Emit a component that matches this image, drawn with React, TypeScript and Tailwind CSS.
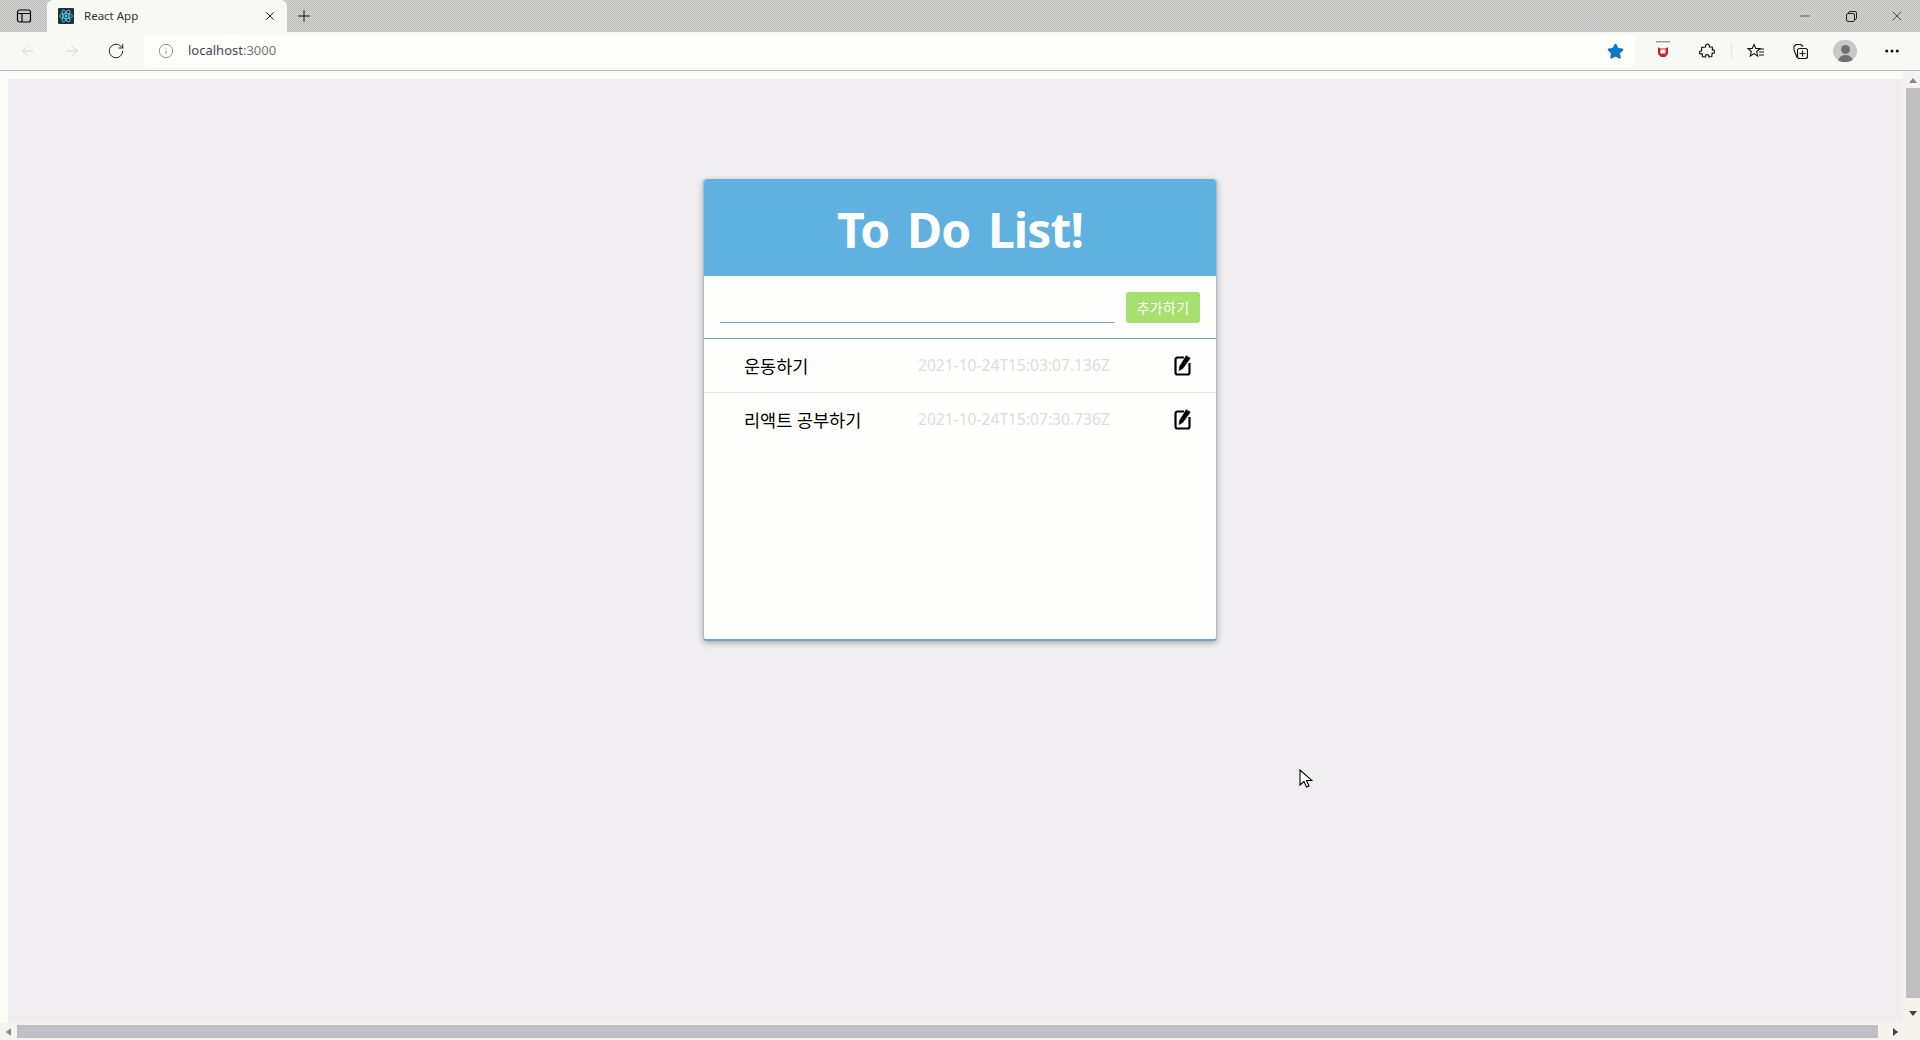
import { ArrowLeft, ArrowRight, RotateCw, Info, X, Plus, Minus, Star, MoreHorizontal } from "lucide-react";

const todos = [
  { title: "운동하기", date: "2021-10-24T15:03:07.136Z" },
  { title: "리액트 공부하기", date: "2021-10-24T15:07:30.736Z" },
];

function PencilSquare() {
  return (
    <svg width="17" height="22" viewBox="0 0 17 22" fill="none" className="mb-[2px]">
      <path d="M10 3.5H3.5A2 2 0 0 0 1.5 5.5v13a2 2 0 0 0 2 2h10a2 2 0 0 0 2-2V9" stroke="black" strokeWidth="2.2" />
      <path d="M12 1l5 3-8 11-4.500 2.500 0.500-5z" fill="black" stroke="white" strokeWidth="0.6" />
    </svg>
  );
}

function ReactFavicon() {
  return (
    <svg width="16" height="16" viewBox="0 0 16 16">
      <rect width="16" height="16" rx="1" fill="#20343c" />
      <g stroke="#61dafb" strokeWidth="0.8" fill="none">
        <ellipse cx="8" cy="8" rx="6.5" ry="2.5" />
        <ellipse cx="8" cy="8" rx="6.5" ry="2.5" transform="rotate(60 8 8)" />
        <ellipse cx="8" cy="8" rx="6.5" ry="2.5" transform="rotate(120 8 8)" />
      </g>
      <circle cx="8" cy="8" r="1.3" fill="#61dafb" />
    </svg>
  );
}

function TitleBar() {
  return (
    <div className="flex h-8 shrink-0 items-stretch bg-[image:repeating-conic-gradient(#d4d4c2_0_25%,#bcbcca_0_50%)] bg-[length:2px_2px]">
      <div className="flex w-[47px] items-center justify-center">
        <svg width="16" height="16" viewBox="0 0 16 16" fill="none" stroke="black" strokeWidth="1.2">
          <rect x="1.5" y="2" width="13" height="12" rx="2" />
          <path d="M1.5 5.5h13M6 5.5V14" />
        </svg>
      </div>
      <div className="flex w-[240px] items-center rounded-t-md bg-[#f8f8f4] pl-[11px] pr-[10px]">
        <ReactFavicon />
        <span className="ml-[10px] flex-1 text-[11.5px] text-[#333]">React App</span>
        <X size={14} color="black" strokeWidth={1.5} />
      </div>
      <div className="flex w-[34px] items-center justify-center">
        <Plus size={18} color="black" strokeWidth={1.2} />
      </div>
      <div className="flex-1" />
      <div className="flex items-center">
        <div className="flex w-[46px] justify-center">
          <Minus size={14} color="#222" strokeWidth={1.2} />
        </div>
        <div className="flex w-[46px] justify-center">
          <svg width="11" height="11" viewBox="0 0 11 11" fill="none" stroke="#222">
            <rect x="0.5" y="2.5" width="8" height="8" rx="1.5" />
            <path d="M2.5 2.5v-0.5a1.5 1.5 0 0 1 1.5-1.5h5a1.5 1.5 0 0 1 1.5 1.5v5a1.5 1.5 0 0 1-1.5 1.5" />
          </svg>
        </div>
        <div className="flex w-[46px] justify-center">
          <X size={16} color="#222" strokeWidth={1.1} />
        </div>
      </div>
    </div>
  );
}

function Toolbar() {
  return (
    <div className="flex h-[39px] shrink-0 items-center border-b border-[#b8b8d4] bg-[#f8f8f4]">
      <div className="flex w-[144px] items-center pl-[19px]">
        <ArrowLeft size={18} color="#d4d4d4" strokeWidth={1.2} />
        <ArrowRight size={18} color="#d4d4d4" strokeWidth={1.2} className="ml-[26px]" />
        <RotateCw size={18} color="#222" strokeWidth={1.3} className="ml-[26px]" />
      </div>
      <div className="flex h-[32px] w-[1491px] items-center rounded bg-[#fefefa] pl-[14px] pr-[11px]">
        <Info size={16} color="#777" strokeWidth={1.2} />
        <span className="ml-[14px] text-[13px] text-[#3b4a55]">
          localhost<span className="text-[#777]">:3000</span>
        </span>
        <div className="flex-1" />
        <Star size={17} color="#0f78c8" fill="#0f78c8" />
      </div>
      <div className="flex flex-1 items-center">
        <div className="flex w-[56px] justify-center">
          <svg width="14" height="20" viewBox="0 0 14 20">
            <rect x="0" y="0" width="14" height="1.5" fill="#999" />
            <path d="M2 6l2 1.5h6L12 6v7l-3 3H5l-3-3z" fill="#c8202c" />
            <rect x="4.5" y="8.5" width="5" height="4" fill="white" />
          </svg>
        </div>
        <div className="ml-1 flex w-6 justify-center">
          <svg width="16" height="16" viewBox="0 0 16 16" fill="none" stroke="#111" strokeWidth="1.2">
            <path d="M6.5 3a2 2 0 0 1 3.5-1.2c.5.6.4 1.4.4 2.2h2.8l.3 3c1.8-.3 2.3 1 2 2-.2 1-1.200 1.500-2.300 1.200l-.4 3.300-3 .3c.2-1.500-.6-2.300-1.800-2.200-1.100.1-1.700 1-1.400 2.300l-3.100-.3-.5-3.100C1 11.500.5 10.500.5 9.500c0-1 1-1.800 2-1.500l.3-3.700 3.700-.3z" />
          </svg>
        </div>
        <div className="ml-3 h-[16px] w-px bg-[#e4e4e4]" />
        <div className="ml-3 flex w-6 justify-center">
          <svg width="18" height="16" viewBox="0 0 18 16" fill="none" stroke="#111" strokeWidth="1.1">
            <path d="M7 1.500l1.800 4h4.200l-3.300 3 1 4.500-3.700-2.400-3.700 2.400 1-4.500-3.300-3h4.200z" />
            <path d="M12 6h5M12 9h5M12 12h5" />
          </svg>
        </div>
        <div className="ml-5 flex w-6 justify-center">
          <svg width="16" height="16" viewBox="0 0 16 16" fill="none" stroke="#111">
            <path d="M5 14.5L2 7V3.500L4 1.500h5l2 2" strokeWidth="1.1" />
            <rect x="5.500" y="5.500" width="10" height="10" rx="2" strokeWidth="1.2" />
            <path d="M10.500 7.500v6M7.500 10.500h6" strokeWidth="1.1" />
          </svg>
        </div>
        <div className="ml-[21px] flex h-[22px] w-6 items-end justify-center overflow-hidden rounded-full bg-[#c8c8c8]">
          <div className="flex flex-col items-center">
            <div className="h-[9px] w-[9px] rounded-full bg-[#707070]" />
            <div className="mt-[1px] h-[7px] w-[15px] rounded-t-full bg-[#707070]" />
          </div>
        </div>
        <div className="ml-[23px] flex w-6 justify-center">
          <MoreHorizontal size={18} color="#111" strokeWidth={2} />
        </div>
      </div>
    </div>
  );
}

function TodoCard() {
  return (
    <div className="ml-[695px] mt-[100px] flex h-[462px] w-[514px] flex-col overflow-hidden rounded border-x border-b-2 border-x-[#a9bccb] border-b-[#6da6cf] bg-[#fefefc] shadow-[0_2px_6px_rgba(0,0,0,0.3)]">
      <div className="flex h-[97px] shrink-0 items-center justify-center bg-[image:repeating-conic-gradient(#68b4ee_0_25%,#58aed0_0_50%)] bg-[length:2px_2px] pt-[4px]">
        <h1 className="text-[48px] font-bold leading-none tracking-[-0.9px] text-white [word-spacing:6px]">
          To Do List!
        </h1>
      </div>
      <div className="flex h-[63px] shrink-0 items-start border-b border-[#7ea6bd] pl-4 pr-4 pt-4">
        <div className="h-[31px] flex-1 border-b border-[#7ba8d6]" />
        <button className="ml-[11px] h-[31px] w-[74px] rounded-[3px] bg-[#a6e06e] text-[14px] tracking-[0.3px] text-white">
          추가하기
        </button>
      </div>
      {todos.map((todo, index) => (
        <div key={todo.title} className={index === 0 ? "flex h-[54px] shrink-0 items-center border-b border-[#e6e6ea] pl-10 pr-[25px]" : "flex h-[54px] shrink-0 items-center pl-10 pr-[25px]"}>
          <span className="w-[174px] pt-[1px] text-[17.5px] text-black">{todo.title}</span>
          <span className="flex-1 text-[15.6px] text-[#dcdce2]">{todo.date}</span>
          <PencilSquare />
        </div>
      ))}
    </div>
  );
}

export default function App() {
  return (
    <div className="flex h-screen w-full flex-col overflow-hidden bg-[#fcfcf6] font-['Noto_Sans','Noto_Sans_CJK_KR',sans-serif]">
      <TitleBar />
      <Toolbar />
      <div className="flex min-h-0 flex-1">
        <main className="mt-2 ml-2 min-w-0 flex-1 bg-[image:repeating-conic-gradient(#f8f6e6_0_25%,#e6e6f8_0_50%)] bg-[length:2px_2px]">
          <TodoCard />
        </main>
        <div className="flex w-[17px] shrink-0 flex-col items-center bg-[#f4f4ec] pl-[2px] pt-[7px]">
          <div className="h-0 w-0 border-x-[4px] border-b-[5px] border-x-transparent border-b-[#888]" />
          <div className="mt-[5px] h-[910px] w-[14px] bg-[#bfbfc4]" />
          <div className="mb-[7px] mt-auto h-0 w-0 border-x-[4px] border-t-[5px] border-x-transparent border-t-[#444]" />
        </div>
      </div>
      <div className="flex h-[17px] shrink-0 items-center bg-[#f4f4ec]">
        <div className="ml-[6px] h-0 w-0 border-y-[4px] border-r-[5px] border-y-transparent border-r-[#888]" />
        <div className="ml-[6px] h-[13px] w-[1861px] bg-[#bfbfc4]" />
        <div className="ml-[15px] h-0 w-0 border-y-[4px] border-l-[5px] border-y-transparent border-l-[#444]" />
      </div>
      <svg width="14" height="20" viewBox="0 0 14 20" className="fixed left-[1299px] top-[769px]">
        <path d="M1 1v15l4-3.5 2.5 5.5 2.5-1-2.5-5.5H13z" fill="white" stroke="black" strokeWidth="1.1" />
      </svg>
    </div>
  );
}
